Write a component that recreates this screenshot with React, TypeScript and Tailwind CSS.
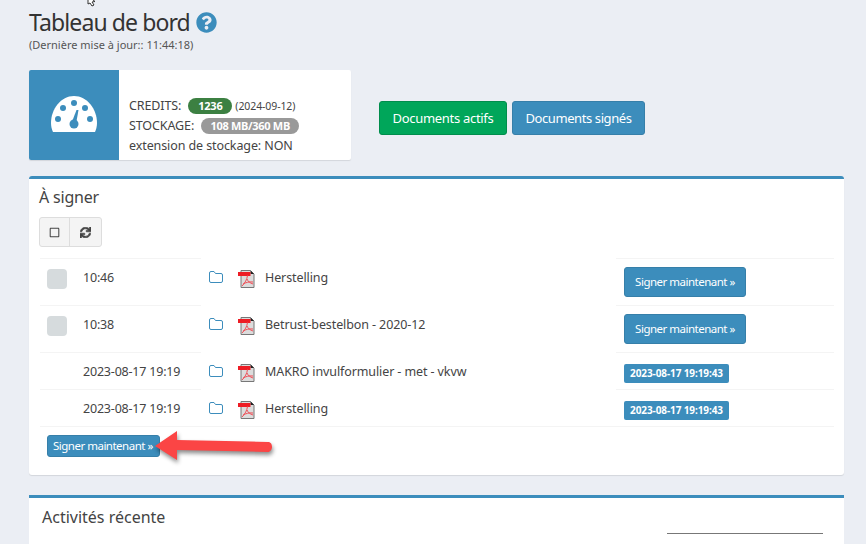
import React from "react";
import { FaQuestionCircle, FaRegSquare, FaSync } from "react-icons/fa";

const rows = [
  { time: "10:46", name: "Herstelling", check: true },
  { time: "10:38", name: "Betrust-bestelbon - 2020-12", check: true },
  { time: "2023-08-17 19:19", name: "MAKRO invulformulier - met - vkvw", check: false },
  { time: "2023-08-17 19:19", name: "Herstelling", check: false },
];

const Gauge = () => (
  <svg width="46" height="36" viewBox="0 0 46 36">
    <path d="M0 27C0 13 10 0 23 0s23 13 23 27c0 3-.6 6-2 9H2c-1.400-3-2-6-2-9z" fill="#fff" />
    <g fill="#3c8dbc">
      <circle cx="7" cy="23" r="3" />
      <circle cx="12" cy="12" r="3" />
      <circle cx="23" cy="7" r="3" />
      <circle cx="34" cy="12" r="3" />
      <circle cx="39" cy="23" r="3" />
      <circle cx="23" cy="28" r="4.500" />
      <path d="M20.500 27l5-13h2l-2.500 14z" />
    </g>
  </svg>
);

const FolderIcon = () => (
  <svg width="14" height="12" viewBox="0 0 14 12" className="shrink-0">
    <path d="M2 .5h3l1.500 2h5.500a1.500 1.500 0 0 1 1.500 1.500v6a1.500 1.500 0 0 1-1.500 1.500H2A1.500 1.500 0 0 1 .5 10V2A1.500 1.500 0 0 1 2 .5z" fill="none" stroke="#3c8dbc" />
  </svg>
);

const PdfIcon = () => (
  <svg width="17" height="18" viewBox="0 0 17 18" className="shrink-0">
    <path d="M3 .5h9.500L16 4v13.500H3z" fill="#dcdcdc" stroke="#777" />
    <path d="M12.500.5V4H16z" fill="#222" />
    <rect x="0" y="2" width="12.500" height="4" fill="#ed1c24" />
    <path d="M9.500 5.500c-.5 4-2.500 7.500-5.500 10.500M9 9c1 2.500 3 4 6 5M5 14c3-1.500 6-2.500 10-2" fill="none" stroke="#ef4f57" />
  </svg>
);

const Cursor = () => (
  <svg width="14" height="8" viewBox="0 0 14 8" className="absolute left-[87px] top-0">
    <path d="M1 -4l0 8 2-1 2 3 2-1-2-3 3-.5z" fill="#fff" stroke="#333" />
  </svg>
);

const Arrow = () => (
  <svg width="124" height="42" viewBox="0 0 124 42" className="absolute left-[150px] top-[429px] drop-shadow-[1px_3px_2px_rgba(0,0,0,0.45)]">
    <path d="M5 17L27 2v9l91 2c3 0 4 2.500 4 5s-2 5-4 5l-91-2v10z" fill="#fb4545" />
  </svg>
);

export default function App() {
  return (
    <div className="relative h-[544px] w-[866px] overflow-hidden bg-[#ebeef4] font-['Noto_Sans','Liberation_Sans',sans-serif] text-[#444]">
      <Cursor />
      <div className="flex items-center gap-[6px] pl-[29px] pt-[6px]">
        <h1 className="text-[23px] leading-[32px] tracking-[-0.9px] text-[#333]">Tableau de bord</h1>
        <FaQuestionCircle className="h-[21px] w-[21px] text-[#3c8dbc]" />
      </div>
      <p className="pl-[29px] text-[11px] leading-[14px] text-[#555]">(Dernière mise à jour:: 11:44:18)</p>

      <div className="mt-[18px] flex items-start pl-[29px]">
        <div className="flex h-[90px] w-[322px] rounded-[2px] bg-white shadow-[0_1px_1px_rgba(0,0,0,0.1)]">
          <div className="flex w-[90px] items-center justify-center rounded-l-[2px] bg-[#3c8dbc] pb-[2px]">
            <Gauge />
          </div>
          <div className="flex flex-col justify-end pb-[4px] pl-[10px] text-[12.500px] leading-[20px] tracking-[-0.1px]">
            <div className="flex items-center">
              CREDITS:
              <span className="ml-[7px] w-[44px] rounded-full bg-[#3c8042] text-center text-[11px] font-bold leading-[16px] tracking-[-0.2px] text-white">1236</span>
              <span className="ml-[3px] text-[10.500px]">(2024-09-12)</span>
            </div>
            <div className="flex items-center">
              STOCKAGE:
              <span className="ml-[7px] w-[98px] rounded-full bg-[#999] text-center text-[11px] font-bold leading-[16px] tracking-[-0.3px] text-white">108 MB/360 MB</span>
            </div>
            <div>extension de stockage: NON</div>
          </div>
        </div>
        <button className="ml-[28px] mt-[31px] h-[34px] w-[128px] rounded-[3px] border border-[#008d4c] bg-[#00a65a] pt-[1px] text-[13px] tracking-[-0.3px] text-white">Documents actifs</button>
        <button className="ml-[5px] mt-[31px] h-[34px] w-[133px] rounded-[3px] border border-[#367fa9] bg-[#3c8dbc] pt-[1px] text-[13px] tracking-[-0.4px] text-white">Documents signés</button>
      </div>

      <section className="ml-[29px] mt-[16px] h-[299px] w-[815px] rounded-[3px] border-t-[3px] border-[#3c8dbc] bg-white px-[10px] shadow-[0_1px_1px_rgba(0,0,0,0.1)]">
        <h2 className="pt-[7px] text-[16px] leading-[22px] tracking-[-0.2px] text-[#444]">À signer</h2>
        <div className="mt-[9px] flex h-[30px] w-[63px] rounded-[3px] border border-[#ddd] bg-[#f4f4f4] text-[#444]">
          <div className="flex w-[30px] items-center justify-center border-r border-[#ddd]">
            <FaRegSquare className="h-[11px] w-[11px]" />
          </div>
          <div className="flex flex-1 items-center justify-center">
            <FaSync className="h-[11px] w-[11px] stroke-[30px]" />
          </div>
        </div>

        <div className="ml-[1px] mt-[11px] w-[794px] border-b border-[#f4f4f4] text-[12.500px] text-[#444]">
          {rows.map((row) => (
            <div key={row.time + row.name} className={`flex ${row.check ? "h-[47px]" : "h-[37px]"}`}>
              <div className="w-[43px] shrink-0 border-t border-[#f4f4f4] pl-[7px] pt-[10px]">
                {row.check && <div className="h-[20px] w-[20px] rounded-[4px] bg-[#d6dbdd]" />}
              </div>
              <div className="w-[118px] shrink-0 border-t border-[#f4f4f4] pt-[10px] leading-[18px] tracking-[-0.2px]">{row.time}</div>
              <div className="flex w-[415px] shrink-0 items-start pl-[8px] pt-[13px]">
                <FolderIcon />
                <div className="ml-[15px] -mt-[1px]"><PdfIcon /></div>
                <span className="ml-[10px] -mt-[2px] leading-[18px] tracking-[-0.1px]">{row.name}</span>
              </div>
              <div className="flex-1 border-t border-[#f4f4f4] pl-[8px] pt-[8px]">
                {row.check ? (
                  <button className="h-[30px] w-[122px] rounded-[3px] border border-[#367fa9] bg-[#3c8dbc] text-[11.500px] tracking-[-0.5px] text-white">Signer maintenant »</button>
                ) : (
                  <span className="mt-[3px] block h-[19px] w-[105px] rounded-[2px] bg-[#3c8dbc] text-center text-[10px] font-bold leading-[18px] tracking-[-0.1px] text-white">2023-08-17 19:19:43</span>
                )}
              </div>
            </div>
          ))}
        </div>
        <div className="ml-[8px] mt-[8px] flex">
          <button className="h-[22px] w-[113px] rounded-[3px] border border-[#367fa9] bg-[#3c8dbc] pl-[5px] text-left text-[11.500px] tracking-[-0.5px] text-white">Signer maintenant »</button>
        </div>
      </section>

      <section className="ml-[29px] mt-[20px] h-[60px] w-[815px] border-t-[3px] border-[#3c8dbc] bg-white pl-[13px] pt-[8px]">
        <h2 className="text-[16px] leading-[22px] text-[#444]">Activités récente</h2>
        <div className="ml-[625px] mt-[5px] h-[1px] w-[156px] bg-[#777]" />
      </section>

      <Arrow />
    </div>
  );
}
